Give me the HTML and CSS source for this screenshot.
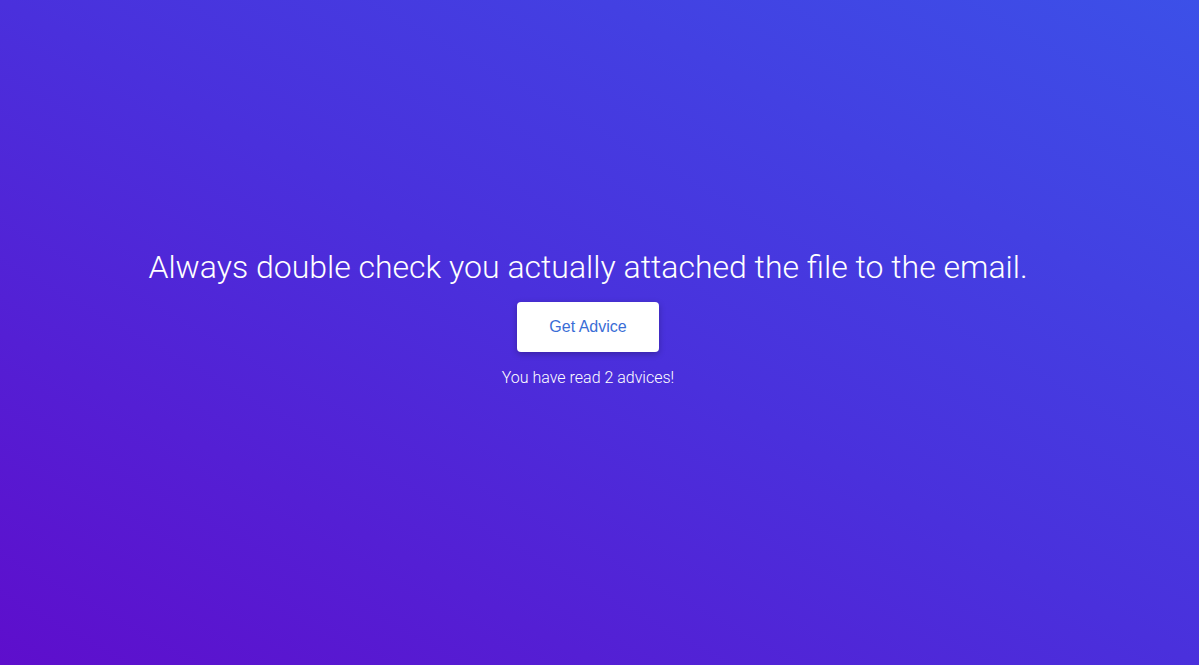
FILE: index.html
```html
<!DOCTYPE html>
<html lang="en">
<head>
<meta charset="utf-8">
<title>Advice</title>
<link rel="stylesheet" href="styles.css">
</head>
<body>
<main class="app">
  <h1 class="advice">Always double check you actually attached the file to the email.</h1>
  <button class="btn" type="button">Get Advice</button>
  <p class="count">You have read 2 advices!</p>
</main>
</body>
</html>
```
FILE: styles.css
```css
html, body {
  margin: 0;
  height: 100%;
}
body {
  background: linear-gradient(to top right, #5e0ecc 0%, #4a30dc 50%, #3c50e8 100%);
  font-family: Roboto, "Liberation Sans", sans-serif;
  color: #fff;
  overflow: hidden;
}
.app {
  height: 100%;
  box-sizing: border-box;
  display: flex;
  flex-direction: column;
  align-items: center;
  padding-top: 248px;
  padding-right: 23px;
}
.advice {
  margin: 0;
  font-size: 32px;
  line-height: 38px;
  font-weight: 300;
  text-align: center;
}
.btn {
  margin-top: 16px;
  width: 142px;
  height: 50px;
  padding: 0;
  border: none;
  border-radius: 4px;
  background: #fff;
  color: #3a6dd6;
  font-family: "Liberation Sans", Arial, sans-serif;
  font-size: 16px;
  font-weight: 400;
  box-shadow: 0 2px 6px rgba(0, 0, 0, 0.25);
  cursor: pointer;
}
.count {
  margin: 16px 0 0;
  font-size: 16px;
  line-height: 20px;
  font-weight: 300;
}
```
